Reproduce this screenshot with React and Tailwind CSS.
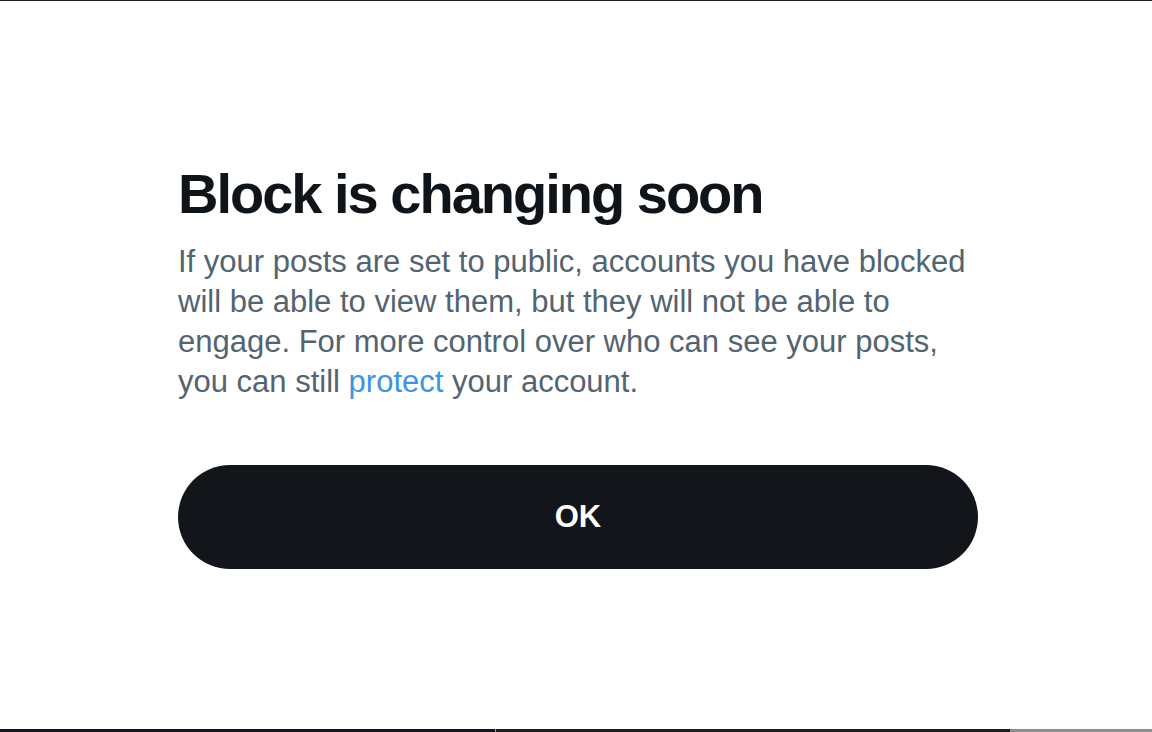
export default function App() {
    return (
        <div className="relative w-[1152px] h-[732px] bg-white overflow-hidden" style={{ fontFamily: '"Liberation Sans", Arial, sans-serif' }}>
            {/* strips of the page behind the modal */}
            <div className="absolute top-0 left-0 right-0 h-px bg-[#1a1d22]" />
            <div className="absolute bottom-0 left-0 right-0 h-[3px] flex">
                <div className="w-[495px] bg-[#15171c]" />
                <div className="w-px bg-[#9a9a9a]" />
                <div className="w-[514px] bg-[#1b1c1f]" />
                <div className="flex-1 bg-[#8d8d8d]" />
            </div>

            <div className="flex flex-col pl-[178px] pt-[162px] w-[978px]">
                <h1 className="text-[56px] leading-[64px] font-bold tracking-[-2px] text-[#0f1419]">
                    Block is changing soon
                </h1>
                <p className="mt-[16px] text-[31px] leading-[40px] text-[#536471] w-[800px]">
                    If your posts are set to public, accounts you have blocked will be able to view them, but they will not be able to engage. For more control over who can see your posts, you can still <span className="text-[#3b94e8]">protect</span> your account.
                </p>
                <button className="mt-[63px] h-[104px] w-[800px] rounded-full bg-[#12151a] text-white text-[31px] font-bold">
                    OK
                </button>
            </div>
        </div>
    );
}
